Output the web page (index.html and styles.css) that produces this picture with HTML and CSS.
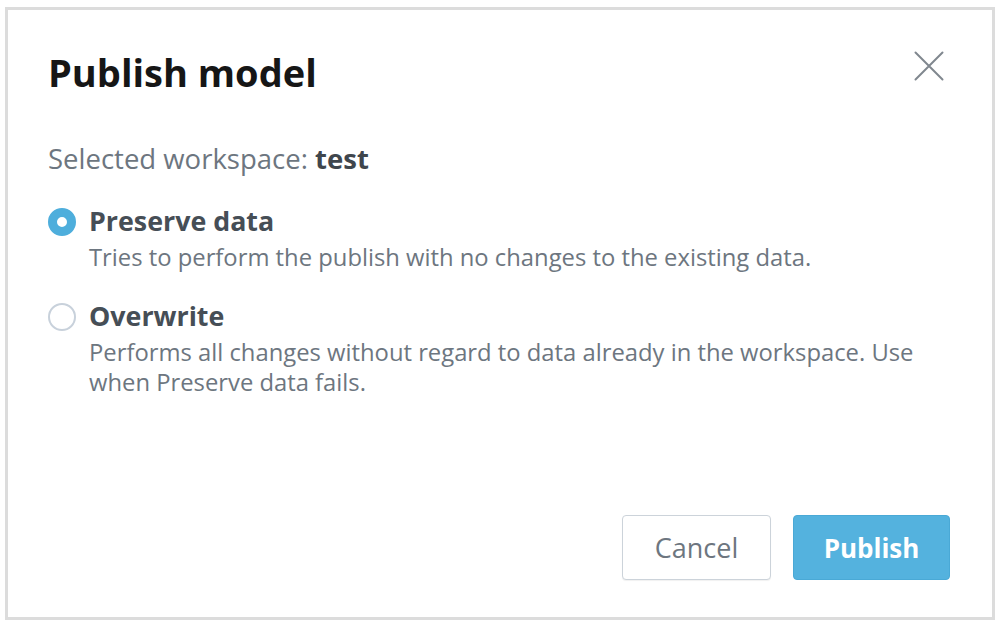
FILE: index.html
```html
<!DOCTYPE html>
<html lang="en">
<head>
  <meta charset="UTF-8">
  <title>Publish model</title>
  <link rel="stylesheet" href="styles.css">
</head>
<body>
  <div class="dialog">
    <div class="dialog-head">
      <h2>Publish model</h2>
      <button class="close" aria-label="Close">
        <svg width="30" height="30" viewBox="0 0 30 30">
          <path d="M1.5 1.5 L28.5 28.5 M28.5 1.5 L1.5 28.5" stroke="#80878f" stroke-width="2" fill="none" stroke-linecap="round"/>
        </svg>
      </button>
    </div>

    <p class="workspace">Selected workspace: <b>test</b></p>

    <label class="option">
      <span class="radio checked"></span>
      <span class="option-text">
        <span class="option-title">Preserve data</span>
        <span class="option-desc">Tries to perform the publish with no changes to the existing data.</span>
      </span>
    </label>

    <label class="option">
      <span class="radio"></span>
      <span class="option-text">
        <span class="option-title">Overwrite</span>
        <span class="option-desc">Performs all changes without regard to data already in the workspace. Use when Preserve data fails.</span>
      </span>
    </label>

    <div class="actions">
      <button class="btn btn-cancel">Cancel</button>
      <button class="btn btn-publish">Publish</button>
    </div>
  </div>
</body>
</html>
```

FILE: styles.css
```css
body {
  margin: 0;
  background: #fff;
  font-family: 'Open Sans', 'Noto Sans', sans-serif;
  color: #6d7680;
}
.dialog {
  box-sizing: border-box;
  margin: 7px 5px 0 5px;
  width: 990px;
  height: 613px;
  border: 3px solid #dcdcdc;
  padding: 39px 42px 0 40px;
  display: flex;
  flex-direction: column;
}
.dialog-head {
  display: flex;
  justify-content: space-between;
  align-items: flex-start;
}
h2 {
  margin: 0;
  font-size: 38px;
  font-weight: bold;
  color: #161616;
  line-height: 46px;
}
.close {
  border: none;
  background: none;
  padding: 0;
  margin-top: 2px;
  margin-right: 6px;
  cursor: pointer;
}
.workspace {
  margin: 47px 0 0 0;
  font-size: 27.5px;
  line-height: 34px;
}
.workspace b {
  color: #3f464d;
}
.option {
  display: flex;
  align-items: flex-start;
  gap: 13px;
  margin-top: 28px;
}
.option + .option {
  margin-top: 27px;
}
.radio {
  box-sizing: border-box;
  flex: none;
  width: 28px;
  height: 28px;
  margin-top: 4px;
  border-radius: 50%;
  border: 2px solid #c8d1db;
  background: #fff;
}
.radio.checked {
  border: 9px solid #4eaedc;
}
.option-text {
  display: flex;
  flex-direction: column;
}
.option-title {
  font-size: 26.8px;
  font-weight: bold;
  color: #464e56;
  line-height: 34px;
}
.option-desc {
  font-size: 23.8px;
  line-height: 30px;
  margin-top: 4px;
  max-width: 830px;
}
.actions {
  margin-top: auto;
  margin-bottom: 37px;
  display: flex;
  justify-content: flex-end;
  gap: 22px;
}
.btn {
  height: 65px;
  border-radius: 4px;
  font-family: 'Open Sans', 'Noto Sans', sans-serif;
  font-size: 27px;
  cursor: pointer;
}
.btn-cancel {
  width: 149px;
  background: #fff;
  border: 1px solid #ccd3da;
  color: #6d7680;
  box-shadow: 0 1px 1px rgba(0, 0, 0, 0.06);
}
.btn-publish {
  width: 157px;
  background: #54b2de;
  border: 1px solid #4aa9d6;
  color: #fff;
  font-weight: bold;
  font-size: 26px;
}
```
